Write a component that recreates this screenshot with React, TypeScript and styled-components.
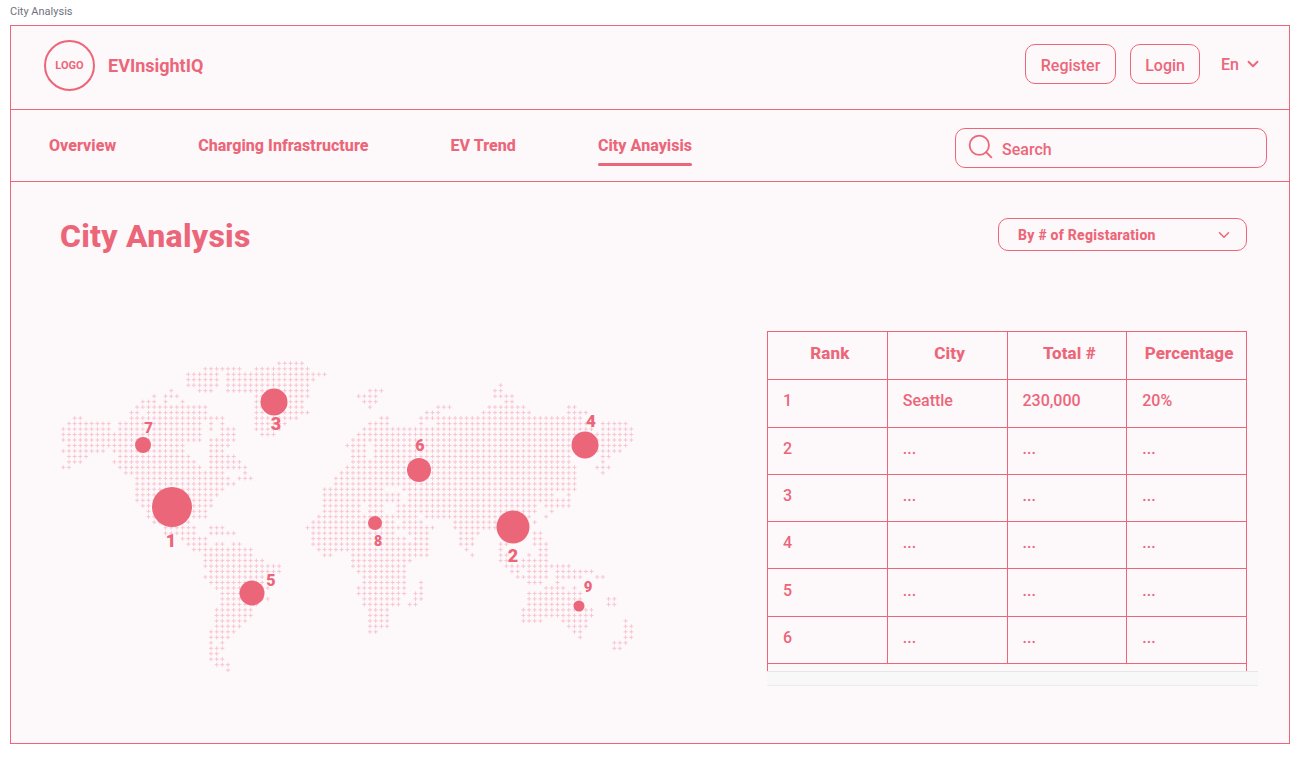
import { useMemo } from "react"
import styled, { createGlobalStyle } from "styled-components"
import { ChevronDown, Search } from "lucide-react"

const PINK = "#ec6679"
const PAPER = "#fdf8fa"

// runs of [first column, last column] for each row of the dotted map
const MAP_ROWS: number[][][] = [
  [[38, 42]],
  [[25, 31], [34, 43]],
  [[22, 27], [29, 46]],
  [[22, 27], [29, 44]],
  [[22, 27], [29, 43], [77, 77]],
  [[19, 19], [24, 26], [29, 33], [34, 43], [54, 56], [76, 77]],
  [[16, 16], [18, 20], [34, 43], [52, 55], [76, 79]],
  [[14, 16], [18, 18], [21, 21], [34, 42], [53, 55], [78, 79]],
  [[13, 25], [34, 42], [54, 54], [66, 68], [75, 81], [89, 90]],
  [[12, 13], [15, 25], [34, 43], [64, 66], [74, 82], [89, 92]],
  [[2, 3], [12, 28], [34, 41], [56, 57], [63, 91]],
  [[1, 8], [10, 24], [26, 26], [28, 28], [34, 39], [54, 57], [63, 63], [66, 92], [95, 99]],
  [[0, 8], [10, 24], [26, 26], [28, 30], [34, 38], [53, 93], [95, 100]],
  [[0, 24], [28, 30], [35, 37], [52, 100]],
  [[0, 24], [26, 30], [51, 100]],
  [[1, 21], [26, 29], [50, 53], [55, 99]],
  [[0, 7], [9, 21], [26, 28], [51, 53], [55, 98]],
  [[1, 4], [10, 22], [26, 30], [51, 53], [55, 89], [95, 96]],
  [[1, 3], [9, 9], [10, 23], [26, 31], [51, 89], [95, 95]],
  [[0, 1], [10, 24], [26, 32], [50, 90], [94, 96]],
  [[11, 28], [32, 32], [49, 90], [95, 95]],
  [[13, 29], [31, 33], [48, 90]],
  [[13, 30], [48, 90]],
  [[13, 28], [46, 56], [60, 90]],
  [[13, 27], [46, 59], [61, 86], [89, 89]],
  [[13, 26], [46, 59], [61, 84], [85, 89]],
  [[14, 26], [46, 52], [54, 56], [59, 83], [85, 89]],
  [[15, 25], [46, 52], [54, 56], [59, 83], [86, 86]],
  [[15, 25], [45, 62], [64, 82], [85, 85]],
  [[16, 22], [44, 58], [60, 63], [69, 76], [83, 83]],
  [[18, 23], [26, 28], [43, 65], [69, 76]],
  [[18, 23], [26, 30], [44, 58], [61, 64], [70, 73], [83, 84]],
  [[21, 25], [44, 60], [62, 64], [70, 72], [83, 84]],
  [[22, 25], [27, 28], [30, 31], [44, 62], [62, 64], [70, 72], [77, 78], [83, 85]],
  [[23, 33], [45, 64], [71, 71], [77, 77], [84, 85]],
  [[25, 33], [46, 47], [51, 64], [72, 72], [77, 78], [82, 82], [84, 85]],
  [[25, 35], [51, 61], [77, 78], [81, 85]],
  [[25, 38], [51, 60], [78, 80], [81, 89]],
  [[26, 38], [52, 60], [79, 80], [82, 85], [87, 93]],
  [[25, 35], [53, 60], [80, 85], [87, 91], [94, 95]],
  [[26, 35], [53, 60], [63, 63], [82, 84], [87, 87]],
  [[27, 36], [52, 60], [63, 63], [85, 88], [90, 90]],
  [[28, 35], [52, 60], [62, 63], [82, 91]],
  [[28, 36], [53, 59], [62, 63], [82, 91], [96, 97]],
  [[28, 34], [53, 59], [61, 62], [82, 90], [96, 97]],
  [[27, 33], [54, 57], [81, 93]],
  [[27, 33], [54, 57], [81, 93]],
  [[27, 32], [54, 57], [81, 84], [88, 92], [99, 99]],
  [[27, 31], [54, 57], [89, 92], [99, 100]],
  [[26, 30], [54, 55], [90, 91], [99, 100]],
  [[26, 29], [91, 91], [99, 100]],
  [[26, 26], [28, 28], [97, 99]],
  [[26, 28], [97, 98]],
  [[26, 27]],
  [[26, 28]],
  [[27, 29]],
  [[29, 29]],
]

const PINS = [
  { rank: 1, x: 111.5, y: 149, size: 40, labelX: 111, labelY: 183, labelSize: 18 },
  { rank: 2, x: 452.5, y: 169, size: 33, labelX: 453, labelY: 198, labelSize: 18 },
  { rank: 3, x: 214, y: 43.5, size: 27, labelX: 216, labelY: 66, labelSize: 18 },
  { rank: 4, x: 525, y: 86.5, size: 27, labelX: 531, labelY: 63, labelSize: 17 },
  { rank: 5, x: 191.5, y: 235, size: 25, labelX: 211, labelY: 223, labelSize: 16 },
  { rank: 6, x: 359, y: 111.5, size: 24, labelX: 360, labelY: 88, labelSize: 16 },
  { rank: 7, x: 83, y: 86.5, size: 16, labelX: 88.5, labelY: 70, labelSize: 15 },
  { rank: 8, x: 314.5, y: 165, size: 14, labelX: 318, labelY: 183, labelSize: 14 },
  { rank: 9, x: 518.5, y: 248, size: 11, labelX: 528, labelY: 229, labelSize: 15 },
]

const TABLE_ROWS = [
  ["1", "Seattle", "230,000", "20%"],
  ["2", "...", "...", "..."],
  ["3", "...", "...", "..."],
  ["4", "...", "...", "..."],
  ["5", "...", "...", "..."],
  ["6", "...", "...", "..."],
]

function DottedMap() {
  const d = useMemo(() => {
    let path = ""
    MAP_ROWS.forEach((runs, r) => {
      const y = 5.3 + 5.48 * r
      runs.forEach(([from, to]) => {
        for (let c = from; c <= to; c++) {
          const x = 3.3 + 5.68 * c
          path += `M${(x - 2).toFixed(1)} ${y.toFixed(1)}h4M${x.toFixed(1)} ${(y - 2).toFixed(1)}v4`
        }
      })
    })
    return path
  }, [])

  return (
    <MapSvg width="580" height="318" viewBox="0 0 580 318">
      <path d={d} fill="none" stroke="#f7c6d2" strokeWidth="1" />
    </MapSvg>
  )
}

function App() {
  return (
    <>
      <GlobalStyle />
      <Caption>City Analysis</Caption>
      <Frame>
        <Header>
          <Brand>
            <LogoMark>LOGO</LogoMark>
            <BrandName>EVInsightIQ</BrandName>
          </Brand>
          <HeaderActions>
            <AuthButton $width={91}>Register</AuthButton>
            <AuthButton $width={70}>Login</AuthButton>
            <LangSelect>
              En <ChevronDown size={18} strokeWidth={2.5} />
            </LangSelect>
          </HeaderActions>
        </Header>

        <NavBar>
          <NavLinks>
            <NavLink>Overview</NavLink>
            <NavLink>Charging Infrastructure</NavLink>
            <NavLink>EV Trend</NavLink>
            <NavLink $active>City Anayisis</NavLink>
          </NavLinks>
          <SearchBox>
            <SearchIcon size={29} strokeWidth={1.5} />
            <span>Search</span>
          </SearchBox>
        </NavBar>

        <Main>
          <TitleRow>
            <Title>City Analysis</Title>
            <SortSelect>
              By # of Registaration
              <ChevronDown size={18} strokeWidth={2} />
            </SortSelect>
          </TitleRow>

          <ContentRow>
            <MapArea>
              <DottedMap />
              {PINS.map((pin) => (
                <div key={pin.rank}>
                  <Pin $size={pin.size} style={{ left: pin.x, top: pin.y }} />
                  <PinLabel $size={pin.labelSize} style={{ left: pin.labelX, top: pin.labelY }}>
                    {pin.rank}
                  </PinLabel>
                </div>
              ))}
            </MapArea>

            <TableArea>
              <RankTable>
                <thead>
                  <tr>
                    <HeadCell>Rank</HeadCell>
                    <HeadCell>City</HeadCell>
                    <HeadCell>Total #</HeadCell>
                    <HeadCell>Percentage</HeadCell>
                  </tr>
                </thead>
                <tbody>
                  {TABLE_ROWS.map((row) => (
                    <tr key={row[0]}>
                      {row.map((value, i) => (
                        <BodyCell key={i}>{value}</BodyCell>
                      ))}
                    </tr>
                  ))}
                </tbody>
              </RankTable>
              <TableTail />
              <ScrollTrack />
            </TableArea>
          </ContentRow>
        </Main>
      </Frame>
    </>
  )
}

const GlobalStyle = createGlobalStyle`
  body {
    margin: 0;
    background: #ffffff;
    font-family: Roboto, "Liberation Sans", sans-serif;
    color: ${PINK};
  }
`

const Caption = styled.div`
  height: 25px;
  padding: 5px 0 0 10px;
  box-sizing: border-box;
  font-size: 11px;
  line-height: 13px;
  color: #6f7280;
`

const Frame = styled.div`
  box-sizing: border-box;
  width: 1280px;
  height: 719px;
  margin-left: 10px;
  border: 1px solid ${PINK};
  background: ${PAPER};
`

const Header = styled.header`
  box-sizing: border-box;
  display: flex;
  align-items: center;
  justify-content: space-between;
  height: 84px;
  padding: 0 27px 4px 33px;
  border-bottom: 1px solid ${PINK};
`

const Brand = styled.div`
  display: flex;
  align-items: center;
  gap: 13px;
`

const LogoMark = styled.div`
  box-sizing: border-box;
  display: flex;
  align-items: center;
  justify-content: center;
  width: 51px;
  height: 51px;
  border: 2px solid ${PINK};
  border-radius: 50%;
  font-size: 11px;
  font-weight: 700;
`

const BrandName = styled.div`
  font-size: 18px;
  font-weight: 700;
`

const HeaderActions = styled.div`
  display: flex;
  align-items: center;
  gap: 14px;
  margin-bottom: 3px;
`

const AuthButton = styled.button<{ $width: number }>`
  box-sizing: border-box;
  width: ${(p) => p.$width}px;
  height: 40px;
  padding: 3px 0 0;
  border: 1px solid ${PINK};
  border-radius: 10px;
  background: transparent;
  color: ${PINK};
  font-family: inherit;
  font-size: 16px;
  font-weight: 500;
`

const LangSelect = styled.div`
  display: flex;
  align-items: center;
  gap: 5px;
  margin: 0 0 0 7px;
  font-size: 16px;
  font-weight: 500;
`

const NavBar = styled.nav`
  box-sizing: border-box;
  display: flex;
  align-items: center;
  justify-content: space-between;
  height: 72px;
  padding: 0 22px 0 38px;
  border-bottom: 1px solid ${PINK};
`

const NavLinks = styled.div`
  display: flex;
  gap: 82px;
  margin-top: 5px;
`

const NavLink = styled.a<{ $active?: boolean }>`
  position: relative;
  padding: 5px 0 11px;
  font-size: 16px;
  line-height: 19px;
  font-weight: 800;
  letter-spacing: 0.05px;

  ${(p) =>
    p.$active &&
    `
    &::after {
      content: "";
      position: absolute;
      left: 0;
      right: 0;
      bottom: 0;
      height: 3px;
      border-radius: 2px;
      background: ${PINK};
    }
  `}
`

const SearchBox = styled.div`
  box-sizing: border-box;
  display: flex;
  align-items: center;
  gap: 7px;
  width: 312px;
  height: 40px;
  margin-top: 4px;
  padding: 0 0 0 10px;
  border: 1px solid ${PINK};
  border-radius: 10px;
  font-size: 16px;
  font-weight: 500;

  span {
    padding-top: 4px;
  }
`

const SearchIcon = styled(Search)`
  margin-bottom: 3px;
`

const Main = styled.main`
  padding: 36px 42px 0 49px;
`

const TitleRow = styled.div`
  display: flex;
  align-items: center;
  justify-content: space-between;
`

const Title = styled.h1`
  height: 33px;
  margin: 0;
  font-size: 32px;
  line-height: 37px;
  font-weight: 800;
  letter-spacing: 0.25px;
`

const SortSelect = styled.div`
  box-sizing: border-box;
  display: flex;
  align-items: center;
  justify-content: space-between;
  width: 249px;
  height: 33px;
  padding: 0 13px 0 19px;
  border: 1px solid ${PINK};
  border-radius: 10px;
  font-size: 14px;
  font-weight: 800;
  letter-spacing: 0.25px;
`

const ContentRow = styled.div`
  display: flex;
  align-items: flex-start;
  justify-content: space-between;
  margin-top: 80px;
`

const MapArea = styled.div`
  position: relative;
  width: 580px;
  height: 318px;
  margin-top: 27px;
`

const MapSvg = styled.svg`
  display: block;
`

const Pin = styled.span<{ $size: number }>`
  position: absolute;
  width: ${(p) => p.$size}px;
  height: ${(p) => p.$size}px;
  border-radius: 50%;
  background: ${PINK};
  transform: translate(-50%, -50%);
`

const PinLabel = styled.span<{ $size: number }>`
  position: absolute;
  font-size: ${(p) => p.$size}px;
  line-height: 1;
  font-weight: 900;
  transform: translate(-50%, -50%);
`

const TableArea = styled.div`
  position: relative;
  width: 480px;
`

const RankTable = styled.table`
  width: 480px;
  table-layout: fixed;
  border-collapse: collapse;

  tbody tr {
    height: 47.3px;
  }

  tbody tr:first-child {
    height: 48px;
  }
`

const HeadCell = styled.th`
  box-sizing: border-box;
  height: 47.5px;
  padding: 0 0 5px 5px;
  border: 1px solid ${PINK};
  font-size: 17px;
  font-weight: 800;
  letter-spacing: 0.1px;
  text-align: center;
  white-space: nowrap;
`

const BodyCell = styled.td`
  padding: 0 0 5px 15px;
  border: 1px solid ${PINK};
  font-size: 16px;
  font-weight: 500;
`

const TableTail = styled.div`
  box-sizing: border-box;
  height: 7px;
  border-left: 1px solid ${PINK};
  border-right: 1px solid ${PINK};
`

const ScrollTrack = styled.div`
  box-sizing: border-box;
  width: 491px;
  height: 15px;
  border-top: 1px solid #e6e6e6;
  border-bottom: 1px solid #ececec;
  background: #f9f8f9;
`

export default App
